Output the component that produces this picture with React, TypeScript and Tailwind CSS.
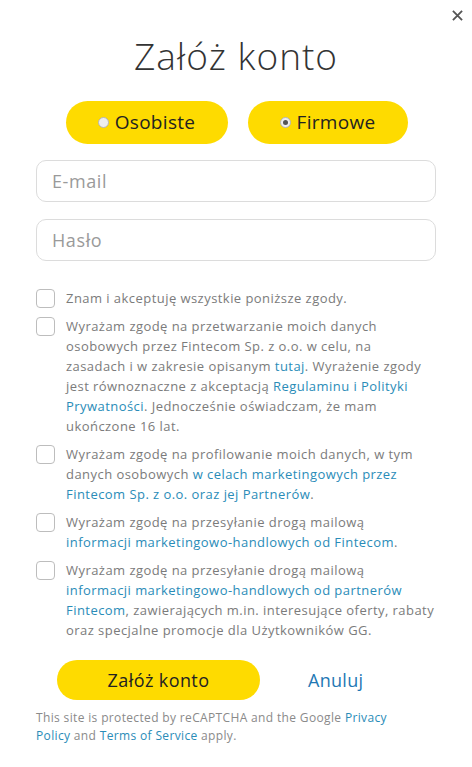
const font = { fontFamily: '"Open Sans", "Liberation Sans", sans-serif' }

function Radio({ checked }: { checked?: boolean }) {
  return (
    <span className="w-[11px] h-[11px] rounded-full border border-[#b5b5b5] bg-[#eeeeee] flex items-center justify-center">
      {checked && <span className="w-[5px] h-[5px] rounded-full bg-[#555]" />}
    </span>
  )
}

function Consent({ lines }: { lines: React.ReactNode[] }) {
  return (
    <div className="flex gap-[11px]">
      <span className="mt-[1px] shrink-0 w-[19px] h-[19px] rounded-[4px] border border-[#bdbdbd] bg-white" />
      <div className="text-[13px] leading-[20px] text-[#7b7b7b] tracking-[0.45px]">
        {lines.map((line, i) => (
          <div key={i} className="whitespace-nowrap">
            {line}
          </div>
        ))}
      </div>
    </div>
  )
}

const A = ({ children }: { children: React.ReactNode }) => (
  <a href="#" className="text-[#2a8cb8]">
    {children}
  </a>
)

export default function App() {
  return (
    <div className="w-[472px] h-[767px] bg-white relative overflow-hidden" style={font}>
      <button className="absolute right-[7px] top-[7px] w-[16px] h-[16px] flex items-center justify-center">
        <svg viewBox="0 0 12 12" className="w-[11px] h-[11px]">
          <path d="M1 1L11 11M11 1L1 11" stroke="#555" strokeWidth="2" />
        </svg>
      </button>

      <div className="px-[36px] pt-[33px]">
        <h1 className="text-center text-[37px] leading-[46px] text-[#333] font-light tracking-[1px]">
          Załóż konto
        </h1>

        <div className="mt-[22px] flex justify-center gap-[20px] pl-[1px]">
          <button className="w-[162px] h-[43px] rounded-full bg-[#fedb00] flex items-center justify-center gap-[6px] text-[19px] text-[#222] tracking-[0.3px]">
            <Radio />
            Osobiste
          </button>
          <button className="w-[160px] h-[43px] rounded-full bg-[#fedb00] flex items-center justify-center gap-[6px] text-[19px] text-[#222] tracking-[0.3px]">
            <Radio checked />
            Firmowe
          </button>
        </div>

        <div className="mt-[16px] flex flex-col gap-[17px]">
          <div className="h-[42px] rounded-[10px] border border-[#dcdcdc] flex items-center px-[15px] text-[18px] text-[#9a9a9a] tracking-[0.6px]">
            E-mail
          </div>
          <div className="h-[42px] rounded-[10px] border border-[#dcdcdc] flex items-center px-[15px] text-[18px] text-[#9a9a9a] tracking-[0.6px]">
            Hasło
          </div>
        </div>

        <div className="mt-[27px] flex flex-col gap-[8px]">
          <Consent lines={['Znam i akceptuję wszystkie poniższe zgody.']} />
          <Consent
            lines={[
              'Wyrażam zgodę na przetwarzanie moich danych',
              'osobowych przez Fintecom Sp. z o.o. w celu, na',
              <>
                zasadach i w zakresie opisanym <A>tutaj</A>. Wyrażenie zgody
              </>,
              <>
                jest równoznaczne z akceptacją <A>Regulaminu i Polityki</A>
              </>,
              <>
                <A>Prywatności</A>. Jednocześnie oświadczam, że mam
              </>,
              'ukończone 16 lat.',
            ]}
          />
          <Consent
            lines={[
              'Wyrażam zgodę na profilowanie moich danych, w tym',
              <>
                danych osobowych <A>w celach marketingowych przez</A>
              </>,
              <>
                <A>Fintecom Sp. z o.o. oraz jej Partnerów</A>.
              </>,
            ]}
          />
          <Consent
            lines={[
              'Wyrażam zgodę na przesyłanie drogą mailową',
              <>
                <A>informacji marketingowo-handlowych od Fintecom</A>.
              </>,
            ]}
          />
          <Consent
            lines={[
              'Wyrażam zgodę na przesyłanie drogą mailową',
              <A>informacji marketingowo-handlowych od partnerów</A>,
              <>
                <A>Fintecom</A>, zawierających m.in. interesujące oferty, rabaty
              </>,
              'oraz specjalne promocje dla Użytkowników GG.',
            ]}
          />
        </div>

        <div className="mt-[20px] flex items-center pl-[21px]">
          <button className="w-[203px] h-[40px] rounded-full bg-[#fedb00] text-[18px] text-[#222] tracking-[0.4px]">
            Załóż konto
          </button>
          <a href="#" className="ml-[48px] text-[18px] text-[#1f78b4] tracking-[0.3px]">
            Anuluj
          </a>
        </div>

        <div className="mt-[9px] text-[12px] leading-[18px] text-[#8a8a8a] tracking-[0.35px]">
          <div className="whitespace-nowrap">
            This site is protected by reCAPTCHA and the Google <A>Privacy</A>
          </div>
          <div className="whitespace-nowrap">
            <A>Policy</A> and <A>Terms of Service</A> apply.
          </div>
        </div>
      </div>
    </div>
  )
}
